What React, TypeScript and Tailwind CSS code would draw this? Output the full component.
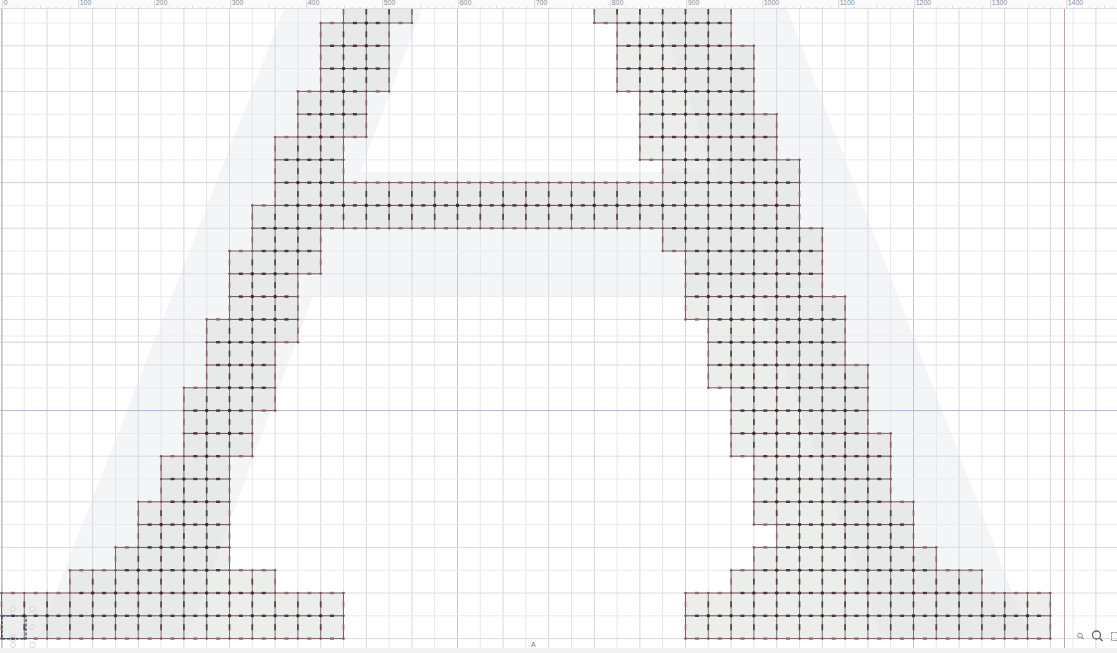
import React from "react";

const STEP = 22.8;
const X0 = 1.5;
const Y0 = 0.2;
const gx = (i: number) => X0 + STEP * i;
const gy = (j: number) => Y0 + STEP * j;

// per row: spans of filled cells [from, to) in grid columns
const ROWS: number[][][] = [
  [[15, 18], [26, 32]],
  [[14, 17], [27, 32]],
  [[14, 17], [27, 33]],
  [[14, 17], [27, 33]],
  [[13, 16], [28, 33]],
  [[13, 16], [28, 34]],
  [[12, 15], [28, 34]],
  [[12, 15], [29, 35]],
  [[12, 35]],
  [[11, 35]],
  [[11, 14], [29, 36]],
  [[10, 14], [30, 36]],
  [[10, 13], [30, 36]],
  [[10, 13], [30, 37]],
  [[9, 13], [31, 37]],
  [[9, 12], [31, 37]],
  [[9, 12], [31, 38]],
  [[8, 12], [32, 38]],
  [[8, 11], [32, 38]],
  [[8, 11], [32, 39]],
  [[7, 10], [33, 39]],
  [[7, 10], [33, 39]],
  [[6, 10], [33, 40]],
  [[6, 10], [34, 40]],
  [[5, 10], [33, 41]],
  [[3, 12], [32, 43]],
  [[0, 15], [30, 46]],
  [[0, 15], [30, 46]],
];

const filled = (i: number, j: number) =>
  j >= 0 && j < ROWS.length && ROWS[j].some(([a, b]) => i >= a && i < b);

const cells: [number, number][] = [];
ROWS.forEach((spans, j) =>
  spans.forEach(([a, b]) => {
    for (let i = a; i < b; i++) cells.push([i, j]);
  })
);

type Edge = { x1: number; y1: number; x2: number; y2: number; inner: boolean; h: boolean };
const edges: Edge[] = [];
const nodes = new Map<string, [number, number]>();
cells.forEach(([i, j]) => {
  edges.push({ x1: gx(i), y1: gy(j), x2: gx(i + 1), y2: gy(j), inner: filled(i, j - 1), h: true });
  edges.push({ x1: gx(i), y1: gy(j), x2: gx(i), y2: gy(j + 1), inner: filled(i - 1, j), h: false });
  if (!filled(i, j + 1)) edges.push({ x1: gx(i), y1: gy(j + 1), x2: gx(i + 1), y2: gy(j + 1), inner: false, h: true });
  if (!filled(i + 1, j)) edges.push({ x1: gx(i + 1), y1: gy(j), x2: gx(i + 1), y2: gy(j + 1), inner: false, h: false });
  [[i, j], [i + 1, j], [i, j + 1], [i + 1, j + 1]].forEach(([a, b]) => nodes.set(`${a}_${b}`, [a, b]));
});

const isInnerNode = (a: number, b: number) =>
  filled(a - 1, b - 1) && filled(a, b - 1) && filled(a - 1, b) && filled(a, b);

const SHADOW =
  "M284 9 L422 9 L360 172 L715 172 L657 9 L787 9 L1030 638 L882 638 L759 296 L313 296 L187 638 L38 638 Z";

function Ruler() {
  const ticks: React.ReactElement[] = [];
  for (let n = 0; n <= 147; n++) {
    const x = 2.7 + 7.6 * n;
    const h = n % 10 === 0 ? 9 : n % 5 === 0 ? 4 : 2;
    ticks.push(<line key={n} x1={x} x2={x} y1={9 - h} y2={9} stroke="#cfcfcf" strokeWidth={0.8} />);
  }
  const labels = Array.from({ length: 15 }, (_, k) => k);
  return (
    <div className="relative h-[9px] shrink-0 overflow-hidden bg-[#fbfbfb] border-b border-[#dcdcdc]">
      <svg className="absolute inset-0" width={1117} height={9}>
        {ticks}
      </svg>
      {labels.map((k) => (
        <span
          key={k}
          className="absolute top-[-2px] text-[7px] leading-[9px] text-[#8a8f98] font-['Liberation_Sans',sans-serif]"
          style={{ left: 3.7 + 76 * k }}
        >
          {k * 100}
        </span>
      ))}
    </div>
  );
}

function Canvas() {
  const vLines: React.ReactElement[] = [];
  for (let i = 0; i <= 49; i++) {
    const color = i === 20 || i === 40 ? "#c6c7d6" : i % 2 === 0 ? "#d8d8e3" : "#e6e6ed";
    vLines.push(<line key={i} x1={gx(i)} x2={gx(i)} y1={9} y2={648} stroke={color} strokeWidth={1} />);
  }
  const hLines: React.ReactElement[] = [];
  for (let j = 1; j <= 28; j++) {
    let color = j % 2 === 0 ? "#dadae5" : "#ebebef";
    if (j === 8) color = "#d0d0dc";
    if (j === 15) color = "#d0d0e2";
    if (j === 18) color = "#b6b6d2";
    hLines.push(<line key={j} x1={0} x2={1117} y1={gy(j)} y2={gy(j)} stroke={color} strokeWidth={1} />);
  }
  return (
    <div className="relative flex-1 overflow-hidden bg-white">
      <svg className="block blur-[0.35px]" width={1117} height={639} viewBox="0 9 1117 639">
        <path d={SHADOW} fill="#f4f5f7" />
        {vLines}
        {hLines}
        <line x1={0} x2={1117} y1={336} y2={336} stroke="#f3e6e9" strokeWidth={1} />
        <line x1={2} x2={2} y1={9} y2={648} stroke="#bdb6b8" strokeWidth={1.2} />
        <line x1={1064.5} x2={1064.5} y1={9} y2={648} stroke="#c2a5a5" strokeWidth={1} />

        {cells.map(([i, j]) => (
          <rect
            key={`${i}-${j}`}
            x={gx(i)}
            y={gy(j)}
            width={STEP}
            height={STEP}
            fill="rgba(222,225,220,0.58)"
          />
        ))}

        {/* faint glyph markers in the lower-left corner */}
        <g fill="none" stroke="#d9dad8" strokeWidth={1}>
          <circle cx={13} cy={609} r={2.5} />
          <rect x={30} y={606.5} width={5} height={5} rx={1} />
          <circle cx={32} cy={627} r={2.5} />
          <circle cx={13} cy={638} r={3.5} />
          <circle cx={13} cy={645} r={2.5} />
          <rect x={30} y={642.5} width={5} height={5} rx={1} />
        </g>

        {edges.map((e, k) => (
          <line
            key={k}
            x1={e.x1}
            y1={e.y1}
            x2={e.x2}
            y2={e.y2}
            stroke={e.inner ? "#6b4f57" : "#7f5c64"}
            strokeWidth={1}
            opacity={e.h || !e.inner ? 1 : 0.75}
          />
        ))}

        {edges.map((e, k) => {
          const mx = (e.x1 + e.x2) / 2;
          const my = (e.y1 + e.y2) / 2;
          const fill = e.inner ? "#4a3640" : "#8f6a72";
          return e.h ? (
            <rect key={k} x={mx - 2} y={my - 1.2} width={4} height={2.4} fill={fill} />
          ) : (
            <rect key={k} x={mx - 0.9} y={my - 3} width={1.8} height={6} fill={fill} opacity={0.85} />
          );
        })}

        {[...nodes.values()].map(([a, b]) => (
          <circle
            key={`${a}n${b}`}
            cx={gx(a)}
            cy={gy(b)}
            r={isInnerNode(a, b) ? 1.8 : 1.3}
            fill={isInnerNode(a, b) ? "#3f2c33" : "#7d5a63"}
          />
        ))}

        {/* current selection */}
        <rect
          x={2}
          y={616}
          width={24}
          height={22.8}
          fill="none"
          stroke="#25406a"
          strokeWidth={1.2}
          strokeDasharray="3 1.5"
        />

        {/* zoom tools */}
        <g fill="none" stroke="#8b8b8b">
          <circle cx={1080} cy={635.5} r={2.4} strokeWidth={1} />
          <line x1={1081.8} y1={637.3} x2={1083.5} y2={639} strokeWidth={1.2} />
          <circle cx={1096.5} cy={635} r={4} strokeWidth={1.3} stroke="#666" />
          <line x1={1099.5} y1={638} x2={1102.5} y2={641} strokeWidth={1.6} stroke="#666" />
          <rect x={1111.5} y={632.5} width={8} height={8} strokeWidth={1} strokeDasharray="2 1" />
        </g>
      </svg>
      <span className="absolute left-[531px] bottom-[-1px] text-[7px] leading-[8px] text-[#777] font-['Liberation_Sans',sans-serif]">
        A
      </span>
    </div>
  );
}

export default function App() {
  return (
    <div className="flex h-[653px] w-[1117px] flex-col overflow-hidden bg-white">
      <Ruler />
      <Canvas />
      <div className="h-[5px] shrink-0 bg-[#f3f3f3]" />
    </div>
  );
}
